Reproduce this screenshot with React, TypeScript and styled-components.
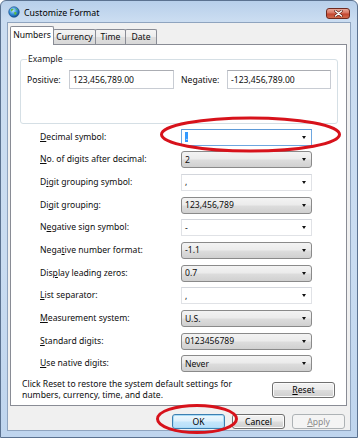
import React from "react";
import styled, { createGlobalStyle, css } from "styled-components";

const FS = "8.6px";

const Global = createGlobalStyle`
  html, body { margin: 0; padding: 0; }
  body {
    width: 358px; height: 438px; overflow: hidden; background: #ffffff;
    font-family: "Noto Sans", "Open Sans", "DejaVu Sans", sans-serif;
    color: #0d0d0d;
  }
  * { box-sizing: border-box; }
`;

const Stage = styled.div`
  position: relative;
  width: 358px;
  height: 438px;
`;

const Window = styled.div`
  width: 358px;
  height: 438px;
  display: flex;
  flex-direction: column;
  border: 1px solid #5b7290;
  border-radius: 6px 6px 0 0;
  padding: 0 6px 6px 6px;
  background: linear-gradient(to bottom, #b7cfea 0px, #cbddf1 20px, #c9dcf1 60%, #bfd5ee 100%);
`;

const TitleBar = styled.div`
  height: 21px;
  display: flex;
  align-items: center;
  padding: 1px 0 0 1px;
  gap: 4px;
`;

const Title = styled.span`
  flex: 1;
  font-size: 8.8px;
  color: #000;
  padding-top: 2px;
`;

const CloseBtn = styled.div`
  width: 24px;
  height: 11px;
  margin-right: 1px;
  margin-top: 2px;
  border: 1px solid #6f2a20;
  border-radius: 3px;
  background: linear-gradient(to bottom, #e9a99b 0%, #d7735f 45%, #c4452f 55%, #d06a4c 100%);
  display: flex;
  align-items: center;
  justify-content: center;
`;

const Client = styled.div`
  flex: 1;
  display: flex;
  flex-direction: column;
  background: #f0f0f0;
  border: 1px solid #8fa4bf;
  padding: 3px 3px 0 2px;
`;

const TabStrip = styled.div`
  height: 18px;
  display: flex;
  align-items: flex-end;
  position: relative;
  z-index: 1;
`;

const Tab = styled.div<{ $active?: boolean; $w: number }>`
  width: ${(p) => p.$w}px;
  font-size: ${FS};
  display: flex;
  align-items: center;
  justify-content: center;
  border: 1px solid #898c95;
  border-bottom: none;
  border-radius: 2px 2px 0 0;
  & + & { margin-left: -1px; }
  ${(p) =>
    p.$active
      ? css`
          height: 19px;
          margin-bottom: -1px;
          background: #ffffff;
          padding-bottom: 2px;
          position: relative;
          z-index: 2;
        `
      : css`
          height: 15px;
          background: linear-gradient(to bottom, #f4f4f4 0%, #ececec 50%, #dfdfdf 51%, #d8d8d8 100%);
        `}
`;

const Panel = styled.div`
  border: 1px solid #898c95;
  background: #ffffff;
  padding: 0 0 3px 0;
  display: flex;
  flex-direction: column;
`;

const Group = styled.fieldset`
  margin: 7px 8px 0 9px;
  padding: 4px 6px 34px 6px;
  border: 1px solid #d5dfe5;
  border-radius: 3px;
  min-width: 0;
`;

const Legend = styled.legend`
  padding: 0 1px;
  font-size: ${FS};
  line-height: 14px;
  color: #1a1a1a;
`;

const ExampleRow = styled.div`
  display: flex;
  align-items: center;
`;

const ExLabel = styled.span<{ $w: number }>`
  width: ${(p) => p.$w}px;
  font-size: ${FS};
`;

const ExBox = styled.div<{ $w: number; $gapAfter?: number }>`
  width: ${(p) => p.$w}px;
  height: 19px;
  margin-right: ${(p) => p.$gapAfter ?? 0}px;
  border: 1px solid #c8ccd3;
  border-top-color: #abadb3;
  background: #ffffff;
  font-size: ${FS};
  display: flex;
  align-items: center;
  padding-left: 3px;
`;

const Rows = styled.div`
  margin-top: 4.5px;
  padding-left: 29px;
  display: grid;
  grid-template-columns: 141px 131px;
  row-gap: 5.7px;
  align-items: center;
`;

const RowLabel = styled.span`
  font-size: ${FS};
  line-height: 17px;
`;

const Key = styled.span`
  text-decoration: underline;
  text-underline-offset: 1px;
  text-decoration-thickness: 1px;
`;

const Combo = styled.div<{ $kind: "edit" | "list"; $focused?: boolean }>`
  height: 17px;
  display: flex;
  align-items: center;
  padding: 0 5px 0 2px;
  font-size: ${FS};
  ${(p) =>
    p.$kind === "list"
      ? css`
          border: 1px solid #8a8a8a;
          border-radius: 3px;
          background: linear-gradient(to bottom, #f3f3f3 0%, #ebebeb 48%, #dddddd 52%, #d0d0d0 100%);
        `
      : css`
          border: 1px solid ${p.$focused ? "#6ea7e0" : "#e0e2e6"};
          border-top-color: ${p.$focused ? "#5c9ad8" : "#d3d6dc"};
          background: #ffffff;
        `}
`;

const ComboText = styled.span`
  flex: 1;
  padding-left: 1px;
  white-space: nowrap;
`;

const Selected = styled.span`
  display: inline-block;
  background: #3399ff;
  color: #ffffff;
  line-height: 10px;
  height: 10px;
  padding: 0 0.5px;
`;

const Arrow = styled.span`
  width: 0;
  height: 0;
  border-left: 2.5px solid transparent;
  border-right: 2.5px solid transparent;
  border-top: 3px solid #111;
`;

const Footer = styled.div`
  margin-top: 6px;
  height: 24px;
  padding: 0 11px 0 11px;
  display: flex;
  align-items: center;
  justify-content: space-between;
`;

const Note = styled.p`
  margin: 0;
  font-size: ${FS};
  line-height: 11.5px;
`;

const Button = styled.div<{ $variant?: "default" | "normal" | "disabled"; $h?: number; $w: number }>`
  width: ${(p) => p.$w}px;
  height: ${(p) => p.$h ?? 15}px;
  border-radius: 3px;
  font-size: ${FS};
  display: flex;
  align-items: center;
  justify-content: center;
  ${(p) =>
    p.$variant === "default"
      ? css`
          border: 1px solid #3c7fb1;
          background: linear-gradient(to bottom, #eef8fe 0%, #dcf0fc 48%, #c4e6fb 52%, #b6dff9 100%);
          box-shadow: inset 0 0 0 1px #a9dcf7;
          color: #000;
        `
      : p.$variant === "disabled"
      ? css`
          border: 1px solid #adb2b5;
          background: #f4f4f4;
          color: #8a8a8a;
        `
      : css`
          border: 1px solid #707070;
          background: linear-gradient(to bottom, #f2f2f2 0%, #ebebeb 48%, #dddddd 52%, #cfcfcf 100%);
          box-shadow: inset 0 0 0 1px #fbfbfb;
          color: #000;
        `}
`;

const ButtonRow = styled.div`
  display: flex;
  justify-content: flex-end;
  gap: 7px;
  padding: 8px 2px 0 0;
`;

const Annotations = styled.svg`
  position: absolute;
  left: 0;
  top: 0;
  width: 358px;
  height: 438px;
  pointer-events: none;
`;

const GlobeIcon = () => (
  <svg width="12" height="12" viewBox="0 0 12 12">
    <defs>
      <radialGradient id="g" cx="40%" cy="35%" r="65%">
        <stop offset="0%" stopColor="#bfe6ff" />
        <stop offset="60%" stopColor="#2f8ad8" />
        <stop offset="100%" stopColor="#14508f" />
      </radialGradient>
    </defs>
    <circle cx="6" cy="6" r="5.3" fill="url(#g)" stroke="#1b4f86" strokeWidth="0.6" />
    <path d="M3 3.2 C4 2.4 5.3 2.6 5.6 3.6 C5.2 4.6 4 4.4 3.6 5.4 C3 5.2 2.6 4.2 3 3.2Z" fill="#5dbb3f" />
    <path d="M6.5 6 C7.6 5.6 8.8 6.2 8.6 7.4 C8.2 8.6 7 9.2 6.4 8.4 C6.2 7.6 6 6.6 6.5 6Z" fill="#5dbb3f" />
    <path d="M7.2 2.2 C8.4 2.6 9.4 3.4 9.6 4.4 C8.8 4.4 8 3.6 7.2 2.2Z" fill="#5dbb3f" />
  </svg>
);

type Row = { label: React.ReactNode; value: string; kind: "edit" | "list"; focused?: boolean };

const rows: Row[] = [
  { label: <><Key>D</Key>ecimal symbol:</>, value: ".", kind: "edit", focused: true },
  { label: <><Key>N</Key>o. of digits after decimal:</>, value: "2", kind: "list" },
  { label: <>D<Key>i</Key>git grouping symbol:</>, value: ",", kind: "edit" },
  { label: <>Di<Key>g</Key>it grouping:</>, value: "123,456,789", kind: "list" },
  { label: <>N<Key>e</Key>gative sign symbol:</>, value: "-", kind: "edit" },
  { label: <>Nega<Key>t</Key>ive number format:</>, value: "-1.1", kind: "list" },
  { label: <>Dis<Key>p</Key>lay leading zeros:</>, value: "0.7", kind: "list" },
  { label: <><Key>L</Key>ist separator:</>, value: ",", kind: "edit" },
  { label: <><Key>M</Key>easurement system:</>, value: "U.S.", kind: "list" },
  { label: <><Key>S</Key>tandard digits:</>, value: "0123456789", kind: "list" },
  { label: <><Key>U</Key>se native digits:</>, value: "Never", kind: "list" },
];

export default function App() {
  return (
    <Stage>
      <Global />
      <Window>
        <TitleBar>
          <GlobeIcon />
          <Title>Customize Format</Title>
          <CloseBtn>
            <svg width="9" height="7" viewBox="0 0 9 7">
              <path d="M1.5 1 L7.5 6 M7.5 1 L1.5 6" stroke="#5a1a10" strokeWidth="2.6" strokeLinecap="round" />
              <path d="M1.5 1 L7.5 6 M7.5 1 L1.5 6" stroke="#ffffff" strokeWidth="1.5" strokeLinecap="round" />
            </svg>
          </CloseBtn>
        </TitleBar>
        <Client>
          <TabStrip>
            <Tab $active $w={44}>Numbers</Tab>
            <Tab $w={43}>Currency</Tab>
            <Tab $w={31}>Time</Tab>
            <Tab $w={32}>Date</Tab>
          </TabStrip>
          <Panel>
            <Group>
              <Legend>Example</Legend>
              <ExampleRow>
                <ExLabel $w={42}>Positive:</ExLabel>
                <ExBox $w={105} $gapAfter={7}>123,456,789.00</ExBox>
                <ExLabel $w={46}>Negative:</ExLabel>
                <ExBox $w={104}>-123,456,789.00</ExBox>
              </ExampleRow>
            </Group>
            <Rows>
              {rows.map((r, i) => (
                <React.Fragment key={i}>
                  <RowLabel>{r.label}</RowLabel>
                  <Combo $kind={r.kind} $focused={r.focused}>
                    <ComboText>{r.focused ? <Selected>{r.value}</Selected> : r.value}</ComboText>
                    <Arrow />
                  </Combo>
                </React.Fragment>
              ))}
            </Rows>
            <Footer>
              <Note>
                Click Reset to restore the system default settings for
                <br />
                numbers, currency, time, and date.
              </Note>
              <Button $w={63} $h={16}>
                <Key>R</Key>eset
              </Button>
            </Footer>
          </Panel>
          <ButtonRow>
            <Button $variant="default" $w={53}>OK</Button>
            <Button $w={53}>Cancel</Button>
            <Button $variant="disabled" $w={53}>
              <Key>A</Key>pply
            </Button>
          </ButtonRow>
        </Client>
      </Window>
      <Annotations viewBox="0 0 358 438">
        <ellipse cx="250.5" cy="134.5" rx="89" ry="16.5" fill="none" stroke="#d7121b" strokeWidth="3" />
        <ellipse cx="197" cy="419" rx="39.5" ry="13.5" fill="none" stroke="#d7121b" strokeWidth="3" />
      </Annotations>
    </Stage>
  );
}
